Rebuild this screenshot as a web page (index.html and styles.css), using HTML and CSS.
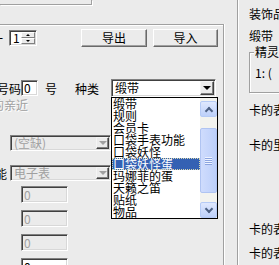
FILE: index.html
```html
<!DOCTYPE html>
<html lang="zh-CN">
<head>
	<meta charset="UTF-8">
	<title>道具编辑</title>
	<link rel="stylesheet" href="styles.css">
</head>
<body>
	<div class="dialog">
		<div class="left">
			<div class="topbox"></div>
			<div class="group">
				<div class="row row1">
					<span class="cut_one">第一</span>
					<div class="spin sunken">
						<span class="spin_val">1</span>
						<span class="spin_btns"><i class="up"></i><i class="down"></i></span>
					</div>
					<button class="btn btn_export">导出</button>
					<button class="btn btn_import">导入</button>
				</div>
				<div class="row row2">
					<span class="lbl_code">号码</span>
					<div class="edit_num sunken">0</div>
					<span class="lbl_hao">号</span>
					<span class="lbl_kind">种类</span>
					<div class="combo">
						<div class="combo_box sunken">
							<span class="combo_text">缎带</span>
							<span class="combo_btn"><i></i></span>
						</div>
						<div class="droplist">
							<ul class="items">
								<li>缎带</li>
								<li>规则</li>
								<li>会员卡</li>
								<li>口袋手表功能</li>
								<li>口袋妖怪</li>
								<li class="sel">口袋妖怪蛋</li>
								<li>玛娜菲的蛋</li>
								<li>天籁之笛</li>
								<li>贴纸</li>
								<li>物品</li>
							</ul>
							<div class="scrollbar">
								<span class="sb_btn sb_up"><i></i></span>
								<span class="sb_track"><span class="sb_thumb"><i></i></span></span>
								<span class="sb_btn sb_down"><i></i></span>
							</div>
						</div>
					</div>
				</div>
				<div class="row row3">
					<span class="lbl_near">的亲近</span>
				</div>
				<div class="row row4">
					<div class="combo_dis sunken">
						<span class="combo_text">(空缺)</span>
						<span class="combo_btn"><i></i></span>
					</div>
				</div>
				<div class="row row5">
					<span class="lbl_func">功能</span>
					<div class="combo_dis sunken">
						<span class="combo_text">电子表</span>
						<span class="combo_btn"><i></i></span>
					</div>
				</div>
				<div class="fields">
					<div class="edit_dis sunken">0</div>
					<div class="edit_dis sunken">0</div>
					<div class="edit_dis sunken">0</div>
					<div class="edit_dis edit_on sunken">0</div>
				</div>
			</div>
		</div>
		<div class="right">
			<div class="r_title">装饰品</div>
			<div class="r_kind">缎带</div>
			<div class="r_group">
				<span class="r_legend">精灵</span>
				1: (
			</div>
			<div class="r_card1">卡的表</div>
			<div class="r_card2">卡的里</div>
			<div class="r_card3">卡的表</div>
			<div class="r_card4">卡的表</div>
		</div>
	</div>
</body>
</html>
```

FILE: styles.css
```css
*{
	box-sizing: border-box;
}
body{
	margin: 0;
	background: #ebebeb;
	font-family: "Noto Sans CJK SC", sans-serif;
	font-size: 12px;
	color: #000;
	overflow: hidden;
}
.dialog{
	display: flex;
	width: 279px;
	height: 265px;
	overflow: hidden;
}
.left{
	width: 237px;
	flex: none;
}
.topbox{
	width: 92px;
	height: 5px;
	border-right: 1px solid #a0a0a0;
	border-bottom: 1px solid #a0a0a0;
	box-shadow: 1px 1px 0 #fff;
}
.group{
	position: relative;
	margin-top: 19px;
	width: 224px;
	height: 250px;
	padding-top: 4px;
	border-top: 1px solid #a0a0a0;
	border-right: 1px solid #a0a0a0;
	box-shadow: inset 0 1px 0 #fff, 1px 0 0 #fff;
}
.row{
	display: flex;
	align-items: center;
	white-space: nowrap;
}
.row1{
	height: 18px;
}
.row2{
	height: 18px;
	margin-top: 32px;
}
.row3{
	height: 14px;
}
.row4{
	height: 16px;
	margin-top: 24px;
}
.row5{
	height: 16px;
	margin-top: 14px;
}
.sunken{
	border: 1px solid;
	border-color: #808080 #fff #fff #808080;
	box-shadow: inset 1px 1px 0 #404040, inset -1px -1px 0 #d8d8d8;
}
.cut_one{
	margin-left: -21px;
	width: 24px;
}
.spin{
	display: flex;
	margin-left: 6px;
	width: 28px;
	height: 16px;
	padding: 1px;
	background: #fff;
}
.spin_val{
	flex: 1;
	padding-left: 2px;
	line-height: 12px;
}
.spin_btns{
	display: flex;
	flex-direction: column;
	width: 14px;
}
.spin_btns i{
	flex: 1;
	display: flex;
	align-items: center;
	justify-content: center;
	background: #ebebeb;
	border: 1px solid;
	border-color: #fff #808080 #808080 #fff;
}
.spin_btns i::after{
	content: "";
	border-left: 2px solid transparent;
	border-right: 2px solid transparent;
}
.spin_btns .up::after{
	border-bottom: 2px solid #000;
}
.spin_btns .down::after{
	border-top: 2px solid #000;
}
.btn{
	height: 18px;
	padding: 0;
	font: inherit;
	line-height: 14px;
	color: #000;
	background: #ebebeb;
	border: 1px solid;
	border-color: #fff #696969 #696969 #fff;
	box-shadow: inset -1px -1px 0 #a0a0a0;
}
.btn_export{
	margin-left: 44px;
	width: 66px;
}
.btn_import{
	margin-left: 6px;
	width: 65px;
}
.lbl_code{
	margin-left: -3px;
	width: 24px;
}
.edit_num{
	width: 17px;
	height: 16px;
	padding-left: 2px;
	line-height: 14px;
	background: #fff;
}
.lbl_hao{
	margin-left: 7px;
}
.lbl_kind{
	margin-left: 18px;
}
.combo{
	position: relative;
	margin-left: 12px;
	width: 105px;
	height: 18px;
}
.combo_box{
	display: flex;
	align-items: center;
	height: 18px;
	padding: 1px;
	background: #fff;
}
.combo_text{
	flex: 1;
	padding-left: 2px;
	line-height: 14px;
}
.combo_btn{
	display: flex;
	align-items: center;
	justify-content: center;
	width: 14px;
	height: 14px;
	background: #ebebeb;
	border: 1px solid;
	border-color: #f4f4f4 #404040 #404040 #f4f4f4;
	box-shadow: inset -1px -1px 0 #808080;
}
.combo_btn i{
	border-left: 4px solid transparent;
	border-right: 4px solid transparent;
	border-top: 4px solid #000;
}
.droplist{
	position: absolute;
	top: 100%;
	left: 0;
	z-index: 10;
	display: flex;
	width: 107px;
	height: 122px;
	border: 1px solid #000;
	background: #fff;
}
.items{
	flex: 1;
	margin: 0;
	padding: 0;
	list-style: none;
}
.items li{
	height: 12px;
	padding-left: 1px;
	line-height: 12px;
	white-space: nowrap;
}
.items .sel{
	background: #3461b3;
	color: #fff;
	outline: 1px dotted #d8d8b0;
	outline-offset: -1px;
}
.scrollbar{
	display: flex;
	flex-direction: column;
	width: 17px;
	background: #f3f3ef;
}
.sb_btn{
	display: flex;
	align-items: center;
	justify-content: center;
	height: 16px;
	border: 1px solid #b6cbf6;
	border-radius: 2px;
	background: linear-gradient(#dfe8fe, #bdd0fa);
}
.sb_up{
	margin-top: 3px;
}
.sb_btn i{
	width: 6px;
	height: 6px;
	border-left: 2px solid #4d6185;
	border-top: 2px solid #4d6185;
}
.sb_up i{
	transform: rotate(45deg);
	margin-top: 3px;
}
.sb_down i{
	transform: rotate(225deg);
	margin-top: -3px;
}
.sb_track{
	flex: 1;
}
.sb_thumb{
	display: flex;
	align-items: center;
	justify-content: center;
	margin-top: 11px;
	height: 65px;
	border: 1px solid #b0c4f2;
	border-radius: 2px;
	background: linear-gradient(90deg, #cfdcfd, #bccffa);
}
.sb_thumb i{
	width: 7px;
	height: 8px;
	background: repeating-linear-gradient(#eef3ff 0 1px, #8ca5e0 1px 2px);
}
.lbl_near{
	margin-left: -8px;
	color: #a0a0a0;
	text-shadow: 1px 1px 0 #fff;
}
.lbl_func{
	margin-left: -17px;
	width: 24px;
}
.combo_dis{
	display: flex;
	align-items: center;
	margin-left: 10px;
	width: 101px;
	height: 16px;
	padding: 1px;
	color: #a0a0a0;
}
.lbl_func + .combo_dis{
	margin-left: 3px;
}
.combo_dis .combo_text{
	line-height: 12px;
}
.combo_dis .combo_btn{
	width: 13px;
	height: 12px;
}
.combo_dis .combo_btn i{
	border-top-color: #a0a0a0;
}
.fields{
	display: flex;
	flex-direction: column;
	gap: 7px;
	margin-top: 5px;
	padding-left: 21px;
}
.edit_dis{
	width: 47px;
	height: 17px;
	padding-left: 2px;
	line-height: 15px;
	color: #a0a0a0;
}
.edit_on{
	background: #fff;
	color: #000;
}
.right{
	flex: none;
	width: 42px;
	padding-left: 11px;
	border-left: 1px solid #a0a0a0;
	box-shadow: inset 1px 0 0 #fff;
	white-space: nowrap;
	line-height: 14px;
}
.r_title{
	margin-top: 7px;
}
.r_kind{
	margin-top: 8px;
}
.r_group{
	position: relative;
	margin-top: 9px;
	width: 60px;
	height: 41px;
	padding: 13px 0 0 5px;
	border: 1px solid #a0a0a0;
	box-shadow: 1px 1px 0 #fff, inset 1px 1px 0 #fff;
}
.r_legend{
	position: absolute;
	top: -8px;
	left: 4px;
	padding: 0 1px;
	background: #ebebeb;
}
.r_card1{
	margin-top: 10px;
}
.r_card2{
	margin-top: 21px;
}
.r_card3{
	margin-top: 70px;
}
.r_card4{
	margin-top: 10px;
}
```
